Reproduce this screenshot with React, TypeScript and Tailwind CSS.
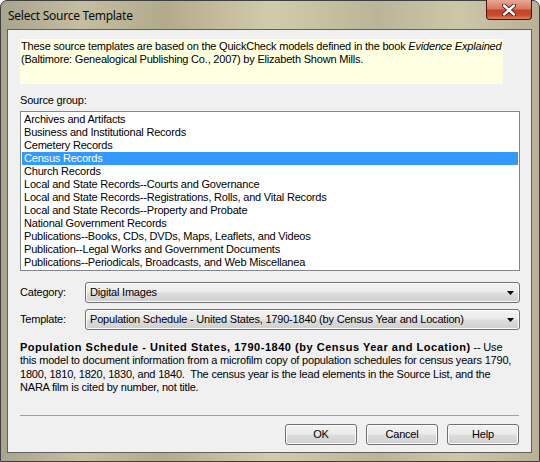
import React from 'react';

const groups = [
    'Archives and Artifacts',
    'Business and Institutional Records',
    'Cemetery Records',
    'Census Records',
    'Church Records',
    'Local and State Records--Courts and Governance',
    'Local and State Records--Registrations, Rolls, and Vital Records',
    'Local and State Records--Property and Probate',
    'National Government Records',
    'Publications--Books, CDs, DVDs, Maps, Leaflets, and Videos',
    'Publication--Legal Works and Government Documents',
    'Publications--Periodicals, Broadcasts, and Web Miscellanea',
];

const btn =
    'h-[21px] rounded-[3px] border border-[#707070] bg-[linear-gradient(to_bottom,#f2f2f2_0%,#ebebeb_48%,#dddddd_52%,#cfcfcf_100%)] shadow-[inset_0_0_0_1px_#fcfcfc]';

function Combo({ value }: { value: string }) {
    return (
        <div className={`${btn} w-[435px] flex items-center justify-between pl-[4px] pr-[5px]`}>
            <span className="whitespace-nowrap">{value}</span>
            <svg width="7" height="4" viewBox="0 0 7 4">
                <path d="M0 0h7L3.5 4z" fill="#000" />
            </svg>
        </div>
    );
}

export default function App() {
    return (
        <div
            className="relative w-[540px] h-[462px] rounded-t-[7px] border border-[#3f3f3f] bg-[linear-gradient(to_right,#a9a48d_0%,#c4bea2_15%,#b3aa8c_30%,#d2cbab_50%,#bcb498_70%,#cdc6a9_85%,#b8b197_100%)] text-black text-[11px] leading-[13px] tracking-[-0.2px]"
            style={{ fontFamily: '"Liberation Sans", Arial, sans-serif' }}
        >
            <div
                className="h-[28px] flex items-center pl-[7px] text-[12px] tracking-[-0.25px] text-[#0b0b0b]"
                style={{ fontFamily: '"Noto Sans", "Open Sans", sans-serif' }}
            >
                Select Source Template
            </div>

            <div className="absolute top-[-1px] right-[7px] w-[46px] h-[20px] rounded-b-[4px] border border-[#4a160c] border-t-0 bg-[linear-gradient(to_bottom,#e9a893_0%,#d87a60_45%,#c4432a_55%,#c94b2f_80%,#e0805f_100%)] flex items-center justify-center">
                <svg width="14" height="12" viewBox="0 0 14 12">
                    <path
                        d="M2 1.5L12 10.5M12 1.5L2 10.5"
                        stroke="#3b1d18"
                        strokeWidth="4.2"
                        strokeLinecap="round"
                    />
                    <path d="M2 1.5L12 10.5M12 1.5L2 10.5" stroke="#fff" strokeWidth="2.4" strokeLinecap="round" />
                </svg>
            </div>

            <div className="ml-[6px] w-[525px] h-[424px] border border-[#5f5f5f] bg-[#f0f0f0] pl-[12px] pt-[9px] flex flex-col">
                <div className="w-[483px] h-[45px] bg-[#ffffe1] pl-[1px] pt-[1px] whitespace-nowrap">
                    These source templates are based on the QuickCheck models defined in the book{' '}
                    <i>Evidence Explained</i>
                    <br />
                    (Baltimore: Genealogical Publishing Co., 2007) by Elizabeth Shown Mills.
                </div>

                <div className="mt-[10px] h-[13px]">Source group:</div>

                <div className="mt-[4px] w-[500px] h-[160px] border border-[#828790] bg-white p-[1px]">
                    {groups.map((g, i) => (
                        <div
                            key={g}
                            className={`h-[13px] pl-[2px] whitespace-nowrap ${i === 3 ? 'bg-[#3399ff] text-white' : ''}`}
                        >
                            {g}
                        </div>
                    ))}
                </div>

                <div className="mt-[11px] flex items-center">
                    <span className="w-[65px]">Category:</span>
                    <Combo value="Digital Images" />
                </div>
                <div className="mt-[6px] flex items-center">
                    <span className="w-[65px]">Template:</span>
                    <Combo value="Population Schedule - United States, 1790-1840 (by Census Year and Location)" />
                </div>

                <div className="mt-[11px] leading-[13.3px] whitespace-pre">
                    <b className="tracking-[0.52px]">
                        Population Schedule - United States, 1790-1840 (by Census Year and Location)
                    </b>{' '}
                    -- Use
                    {'\n'}this model to document information from a microfilm copy of population schedules for census years 1790,
                    {'\n'}1800, 1810, 1820, 1830, and 1840.  The census year is the lead elements in the Source List, and the
                    {'\n'}NARA film is cited by number, not title.
                </div>

                <div className="mt-[21px] w-[499px] h-px bg-[#a0a0a0]" />

                <div className="mt-[8px] w-[499px] flex justify-end gap-[9px]">
                    <button className={`${btn} w-[72px]`}>OK</button>
                    <button className={`${btn} w-[72px]`}>Cancel</button>
                    <button className={`${btn} w-[72px]`}>Help</button>
                </div>
            </div>
        </div>
    );
}
